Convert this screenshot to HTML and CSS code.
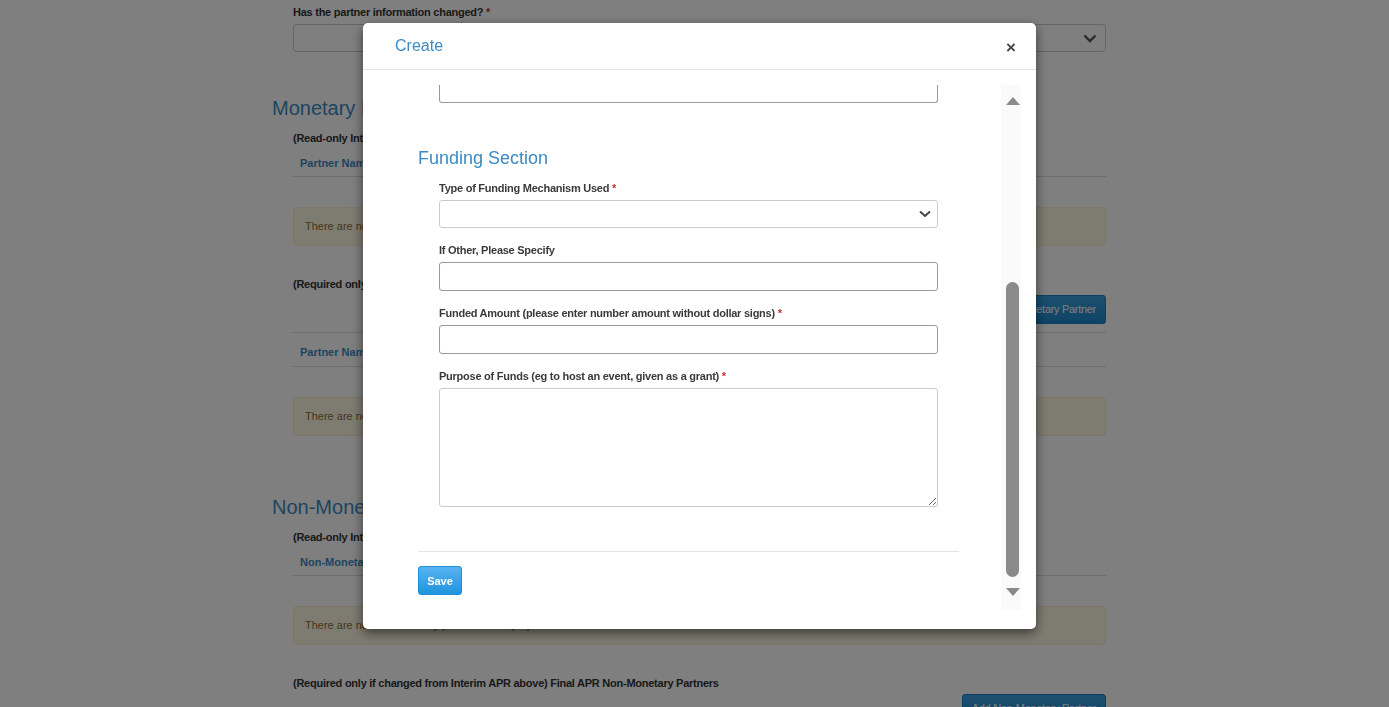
FILE: index.html
```html
<!DOCTYPE html>
<html>
<head>
<meta charset="utf-8">
<title>Create</title>
<link rel="stylesheet" href="styles.css">
</head>
<body>
<div class="page">
  <div class="field-block">
    <label class="plabel">Has the partner information changed? <span class="req">*</span></label>
    <div class="pselect">
      <svg width="14" height="9" viewBox="0 0 14 9"><path d="M1.5 1.5 L7 7 L12.5 1.5" fill="none" stroke="#555" stroke-width="2.4"/></svg>
    </div>
  </div>

  <h2 class="ph2 first">Monetary Partners</h2>
  <div class="pbold">(Read-only Interim APR) Monetary Partners</div>
  <div class="pthead"><span>Partner Name</span><span>Partner Type</span><span>Amount</span></div>
  <div class="palert">There are no monetary partners to display.</div>

  <div class="pbold req-title">(Required only if changed from Interim APR above) Final APR Monetary Partners</div>
  <div class="pbtn-row"><span class="pbtn">Add Monetary Partner</span></div>
  <div class="pthead bordered"><span>Partner Name</span><span>Partner Type</span><span>Amount</span></div>
  <div class="palert">There are no monetary partners to display.</div>

  <h2 class="ph2 second">Non-Monetary Partners</h2>
  <div class="pbold">(Read-only Interim APR) Non-Monetary Partners</div>
  <div class="pthead"><span>Non-Monetary Partner Name</span><span>Partner Type</span></div>
  <div class="palert">There are no non-monetary partners to display.</div>

  <div class="pbold req-title">(Required only if changed from Interim APR above) Final APR Non-Monetary Partners</div>
  <div class="pbtn-row"><span class="pbtn">Add Non-Monetary Partner</span></div>
</div>

<div class="backdrop"></div>

<div class="modal">
  <div class="modal-header">
    <div class="modal-title">Create</div>
    <div class="close">&times;</div>
  </div>
  <div class="modal-body">
    <div class="viewport">
      <div class="content">
        <div class="field partial"></div>
        <h3 class="section-title">Funding Section</h3>
        <div class="group">
          <label class="mlabel">Type of Funding Mechanism Used <span class="req">*</span></label>
          <div class="mselect">
            <svg width="12" height="8" viewBox="0 0 12 8"><path d="M1 1.5 L6 6 L11 1.5" fill="none" stroke="#444" stroke-width="2"/></svg>
          </div>
        </div>
        <div class="group">
          <label class="mlabel">If Other, Please Specify</label>
          <input class="minput" type="text">
        </div>
        <div class="group">
          <label class="mlabel">Funded Amount (please enter number amount without dollar signs) <span class="req">*</span></label>
          <input class="minput" type="text">
        </div>
        <div class="group">
          <label class="mlabel">Purpose of Funds (eg to host an event, given as a grant) <span class="req">*</span></label>
          <textarea class="mtextarea"></textarea>
        </div>
        <div class="footer">
          <button class="save">Save</button>
        </div>
      </div>
      <div class="scrollbar">
        <div class="arrow up"></div>
        <div class="track">
          <div class="thumb"></div>
        </div>
        <div class="arrow down"></div>
      </div>
    </div>
  </div>
</div>
</body>
</html>
```

FILE: styles.css
```css
* { box-sizing: border-box; }

html, body {
  margin: 0;
  padding: 0;
  height: 100%;
  overflow: hidden;
}

body {
  background: #fff;
  font-family: "Liberation Sans", Arial, sans-serif;
  color: #333;
}

/* ---------- background page ---------- */
.page {
  width: 855px;
  margin-left: 272px;
  padding-top: 4px;
}

.field-block {
  padding: 0 21px;
}

.plabel {
  display: block;
  font-size: 11px;
  font-weight: bold;
  letter-spacing: -0.25px;
  line-height: 16px;
  margin-bottom: 4px;
}

.req { color: #c9302c; }

.pselect {
  height: 28px;
  border: 1px solid #ccc;
  border-radius: 4px;
  display: flex;
  align-items: center;
  justify-content: flex-end;
  padding-right: 8px;
}

.ph2 {
  margin: 0;
  font-size: 20px;
  font-weight: normal;
  color: #3b8ac4;
  line-height: 24px;
}
.ph2.first { margin-top: 44px; }
.ph2.second { margin-top: 59px; }

.pbold {
  margin: 10px 21px 0;
  font-size: 11px;
  font-weight: bold;
  letter-spacing: -0.25px;
  line-height: 16px;
}

.pthead {
  margin: 9px 21px 0;
  height: 22px;
  border-bottom: 1px solid #ddd;
  display: flex;
  gap: 160px;
  padding-left: 7px;
  font-size: 11px;
  font-weight: bold;
  color: #3b8ac4;
  line-height: 12px;
  padding-top: 2px;
}
.pthead.bordered {
  margin-top: 8px;
  border-top: 1px solid #ddd;
  height: 35px;
  padding-top: 13px;
}

.palert {
  margin: 30px 21px 0;
  height: 39px;
  background: #fcf8e3;
  border: 1px solid #faebcc;
  border-radius: 4px;
  color: #8a6d3b;
  font-size: 11px;
  line-height: 37px;
  padding-left: 11px;
}

.pbold.req-title { margin-top: 30px; }

.pbtn-row {
  margin: 3px 21px 0;
  display: flex;
  justify-content: flex-end;
}

.pbtn {
  display: inline-block;
  height: 29px;
  line-height: 27px;
  padding: 0 9px;
  font-size: 11px;
  letter-spacing: -0.3px;
  color: #fff;
  background: linear-gradient(#3a9fe0, #1c88cc);
  border: 1px solid #1a7fc0;
  border-radius: 3px;
}

/* ---------- overlay ---------- */
.backdrop {
  position: fixed;
  inset: 0;
  background: rgba(0, 0, 0, 0.5);
}

/* ---------- modal ---------- */
.modal {
  position: fixed;
  left: 363px;
  top: 23px;
  width: 673px;
  height: 606px;
  background: #fff;
  border-radius: 5px;
  box-shadow: 0 4px 12px rgba(0, 0, 0, 0.55);
  display: flex;
  flex-direction: column;
}

.modal-header {
  height: 47px;
  border-bottom: 1px solid #e5e5e5;
  display: flex;
  align-items: center;
  justify-content: space-between;
  padding: 0 20px 0 32px;
}

.modal-title {
  font-size: 16px;
  color: #3b8ac4;
}

.close {
  font-size: 17px;
  font-weight: bold;
  color: #444;
  line-height: 1;
  margin-top: 3px;
}

.modal-body {
  padding: 15px 15px 19px 15px;
  flex: 1;
  min-height: 0;
}

.viewport {
  height: 100%;
  display: flex;
  overflow: hidden;
}

.content {
  flex: 1;
  padding-left: 40px;
  padding-right: 42px;
}

.field.partial {
  margin: 0 21px;
  height: 18px;
  border: 1px solid #999;
  border-top: none;
  border-radius: 0 0 3px 3px;
}

.section-title {
  margin: 45px 0 13px;
  font-size: 18px;
  font-weight: normal;
  color: #3b8ac4;
  line-height: 20px;
}

.group {
  margin: 0 21px 15px;
}

.mlabel {
  display: block;
  font-size: 11px;
  font-weight: bold;
  letter-spacing: -0.25px;
  color: #3a3a3a;
  line-height: 15px;
  margin-bottom: 4px;
}

.mselect {
  height: 28px;
  border: 1px solid #ccc;
  border-radius: 3px;
  display: flex;
  align-items: center;
  justify-content: flex-end;
  padding-right: 6px;
}

.minput {
  display: block;
  width: 100%;
  height: 29px;
  border: 1px solid #999;
  border-radius: 3px;
  margin: 0;
  padding: 0 6px;
  font-family: inherit;
  background: #fff;
}

.mtextarea {
  display: block;
  width: 100%;
  height: 119px;
  border: 1px solid #ccc;
  border-radius: 3px;
  margin: 0;
  resize: vertical;
  font-family: inherit;
  background: #fff;
}

.footer {
  margin-top: 44px;
  border-top: 1px solid #e5e5e5;
  padding-top: 14px;
}

.save {
  display: block;
  width: 44px;
  height: 29px;
  padding: 0;
  border: 1px solid #1e90dc;
  border-radius: 3px;
  background: linear-gradient(#58b3f0, #1f94de);
  color: #fff;
  font-family: inherit;
  font-size: 11px;
  font-weight: bold;
}

.scrollbar {
  width: 23px;
  flex: none;
  margin-right: -3px;
  background: #fafafa;
  display: flex;
  flex-direction: column;
  align-items: center;
  padding: 12px 0 14px;
}

.arrow {
  width: 0;
  height: 0;
  border-left: 7.5px solid transparent;
  border-right: 7.5px solid transparent;
  flex: none;
}
.arrow.up { border-bottom: 8px solid #8a8a8a; }
.arrow.down { border-top: 8px solid #8a8a8a; }

.track {
  flex: 1;
  width: 13px;
  display: flex;
  flex-direction: column;
  justify-content: flex-end;
  padding: 0 0 11px;
}

.thumb {
  height: 295px;
  background: #8a8a8a;
  border-radius: 7px;
}
```
